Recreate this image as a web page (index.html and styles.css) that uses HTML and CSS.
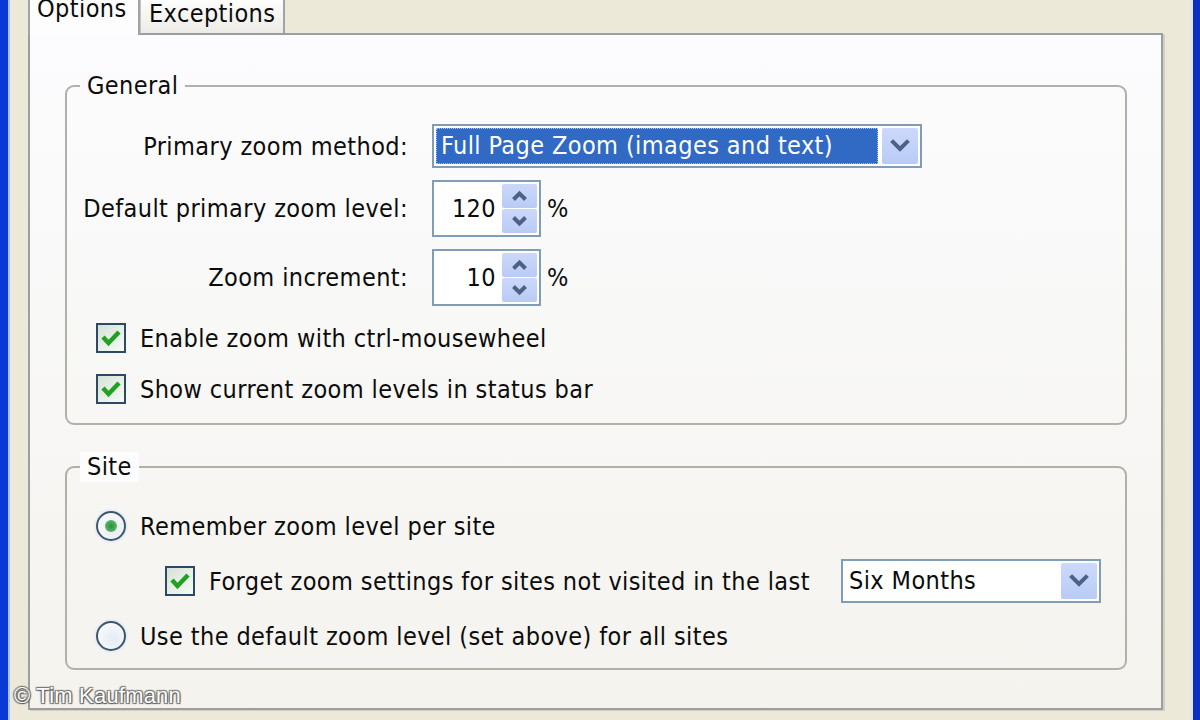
FILE: index.html
```html
<!DOCTYPE html>
<html>
<head>
<meta charset="utf-8">
<link rel="stylesheet" href="styles.css">
</head>
<body>
<div class="frame-l"></div>
<div class="main">
  <div class="tabs">
    <div class="tab tab-opt">Options</div>
    <div class="tab tab-exc">Exceptions</div>
  </div>
  <div class="panel">
    <fieldset class="grp grp-general">
      <legend class="lgd">General</legend>
      <div class="form-grid">
        <div class="lbl">Primary zoom method:</div>
        <div class="combo combo-method">
          <div class="combo-sel">Full Page Zoom (images and text)</div>
          <div class="combo-btn">
            <svg width="36" height="36" viewBox="0 0 36 36"><polyline points="11,14 18,21 25,14" fill="none" stroke="#4d6185" stroke-width="4" stroke-linecap="square"/></svg>
          </div>
        </div>
        <div class="lbl">Default primary zoom level:</div>
        <div class="spin-wrap">
          <div class="spin">
            <div class="spin-val">120</div>
            <div class="spin-btns">
              <div class="spin-b"><svg width="31" height="24" viewBox="0 0 31 24"><polyline points="9.5,15.5 15.5,9.5 21.5,15.5" fill="none" stroke="#4d6185" stroke-width="4"/></svg></div>
              <div class="spin-b"><svg width="31" height="24" viewBox="0 0 31 24"><polyline points="9.5,8.5 15.5,14.5 21.5,8.5" fill="none" stroke="#4d6185" stroke-width="4"/></svg></div>
            </div>
          </div>
          <span class="pct">%</span>
        </div>
        <div class="lbl">Zoom increment:</div>
        <div class="spin-wrap">
          <div class="spin">
            <div class="spin-val">10</div>
            <div class="spin-btns">
              <div class="spin-b"><svg width="31" height="24" viewBox="0 0 31 24"><polyline points="9.5,15.5 15.5,9.5 21.5,15.5" fill="none" stroke="#4d6185" stroke-width="4"/></svg></div>
              <div class="spin-b"><svg width="31" height="24" viewBox="0 0 31 24"><polyline points="9.5,8.5 15.5,14.5 21.5,8.5" fill="none" stroke="#4d6185" stroke-width="4"/></svg></div>
            </div>
          </div>
          <span class="pct">%</span>
        </div>
      </div>
      <div class="checks">
        <div class="row">
          <span class="cb"><svg width="26" height="26" viewBox="0 0 26 26"><polyline points="5,12 10.5,18 21,7" fill="none" stroke="#21a121" stroke-width="4.5"/></svg></span>
          <span>Enable zoom with ctrl-mousewheel</span>
        </div>
        <div class="row">
          <span class="cb"><svg width="26" height="26" viewBox="0 0 26 26"><polyline points="5,12 10.5,18 21,7" fill="none" stroke="#21a121" stroke-width="4.5"/></svg></span>
          <span>Show current zoom levels in status bar</span>
        </div>
      </div>
    </fieldset>

    <fieldset class="grp grp-site">
      <legend class="lgd lgd-site">Site</legend>
      <div class="site-body">
        <div class="row">
          <span class="rb rb-on"><span class="dot"></span></span>
          <span>Remember zoom level per site</span>
        </div>
        <div class="row row-sub">
          <span class="cb"><svg width="26" height="26" viewBox="0 0 26 26"><polyline points="5,12 10.5,18 21,7" fill="none" stroke="#21a121" stroke-width="4.5"/></svg></span>
          <span class="nowrap">Forget zoom settings for sites not visited in the last</span>
          <div class="combo combo-months">
            <div class="combo-txt">Six Months</div>
            <div class="combo-btn">
              <svg width="36" height="36" viewBox="0 0 36 36"><polyline points="11,14 18,21 25,14" fill="none" stroke="#4d6185" stroke-width="4" stroke-linecap="square"/></svg>
            </div>
          </div>
        </div>
        <div class="row">
          <span class="rb"></span>
          <span>Use the default zoom level (set above) for all sites</span>
        </div>
      </div>
    </fieldset>
  </div>
</div>
<div class="frame-r"></div>
<div class="credit">© Tim Kaufmann</div>
</body>
</html>
```

FILE: styles.css
```css
html, body {
  margin: 0;
  padding: 0;
}
body {
  width: 1200px;
  height: 720px;
  overflow: hidden;
  background: #ece9d8;
  font-family: "DejaVu Sans Condensed", "DejaVu Sans", sans-serif;
  font-size: 25px;
  letter-spacing: 0.4px;
  color: #0c0c0c;
  display: flex;
  position: relative;
}
.frame-l {
  width: 8px;
  background: #0a3ad6;
  border-right: 2px solid #a9bdf0;
}
.frame-r {
  width: 7px;
  background: #0b2fc4;
  border-left: 3px solid #dfe3ee;
}
.main {
  flex: 1;
  padding-left: 18px;
  padding-right: 27px;
  display: flex;
  flex-direction: column;
}
.tabs {
  display: flex;
  height: 33px;
  align-items: flex-end;
  flex: none;
}
.tab {
  box-sizing: border-box;
  border: 2px solid #a0a4a4;
  border-bottom: 0;
  border-radius: 4px 4px 0 0;
  line-height: 30px;
  white-space: nowrap;
}
.tab-opt {
  width: 112px;
  height: 43px;
  padding-left: 7px;
  background: #fdfdfd;
  margin-bottom: -2px;
  position: relative;
  z-index: 1;
}
.tab-exc {
  width: 145px;
  height: 36px;
  padding-left: 8px;
  border-left: 1px solid #c4c6c4;
  background: linear-gradient(#fefefe, #ecebe6);
}
.panel {
  box-sizing: border-box;
  height: 677px;
  border: 2px solid #9a9f9f;
  background: linear-gradient(#fcfcfe, #f4f3ee);
  box-shadow: 2px 1px 0 #d2d0c4;
  padding: 0 34px 0 35px;
  display: flex;
  flex-direction: column;
}
.grp {
  margin: 36px 0 0;
  padding: 0 0 14px;
  border: 2px solid #b1b1aa;
  border-radius: 9px;
  min-width: 0;
}
.grp-site {
  margin-top: 27px;
  padding-bottom: 12px;
}
.lgd {
  margin-left: 13px;
  padding: 0 7px;
  line-height: 30px;
}
.lgd-site {
  background: #fdfdfd;
}
.form-grid {
  display: grid;
  grid-template-columns: 341px auto;
  column-gap: 24px;
  row-gap: 12px;
  margin-top: 23px;
  align-items: center;
  justify-items: start;
}
.lbl {
  justify-self: end;
  white-space: nowrap;
}
.combo {
  box-sizing: border-box;
  height: 44px;
  border: 2px solid #7f9db9;
  background: #fff;
  padding: 2px;
  display: flex;
  align-items: stretch;
}
.combo-method {
  width: 490px;
}
.combo-sel {
  flex: 1;
  background: #316ac5;
  color: #fff;
  border: 1px dotted #a9c0ee;
  margin-right: 4px;
  padding-left: 4px;
  line-height: 34px;
  white-space: nowrap;
}
.combo-txt {
  flex: 1;
  padding-left: 4px;
  line-height: 36px;
  white-space: nowrap;
}
.combo-btn {
  width: 36px;
  background: linear-gradient(#cdd9fb, #b8cbf6);
  border-radius: 2px;
  display: flex;
  align-items: center;
  justify-content: center;
}
.spin-wrap {
  display: flex;
  align-items: center;
  gap: 6px;
}
.spin {
  box-sizing: border-box;
  width: 109px;
  height: 57px;
  border: 2px solid #7f9db9;
  background: #fff;
  padding: 2px;
  display: flex;
}
.spin-val {
  flex: 1;
  text-align: right;
  padding-right: 6px;
  align-self: center;
}
.spin-btns {
  width: 35px;
  display: flex;
  flex-direction: column;
  gap: 1px;
}
.spin-b {
  flex: 1;
  background: linear-gradient(#ccd8fa, #b9cbf5);
  border-radius: 2px;
  display: flex;
  align-items: center;
  justify-content: center;
}
.checks {
  padding-left: 29px;
  margin-top: 12px;
  display: flex;
  flex-direction: column;
  gap: 11px;
}
.row {
  height: 40px;
  display: flex;
  align-items: center;
  gap: 14px;
  white-space: nowrap;
}
.cb {
  box-sizing: border-box;
  width: 30px;
  height: 30px;
  border: 2px solid #2c4a64;
  background: linear-gradient(135deg, #d6e2d6, #f6faf6);
  display: flex;
  align-items: center;
  justify-content: center;
  flex: none;
}
.site-body {
  margin-top: 24px;
  padding-left: 29px;
  display: flex;
  flex-direction: column;
  gap: 13px;
}
.row-sub {
  height: 44px;
  padding-left: 69px;
  padding-right: 24px;
}
.combo-months {
  width: 260px;
  margin-left: auto;
}
.rb {
  box-sizing: border-box;
  width: 30px;
  height: 30px;
  border: 2px solid #3f5568;
  border-radius: 50%;
  background: radial-gradient(circle at 60% 60%, #e4ebf4, #ffffff);
  box-shadow: 0 0 0 2px #e8eef8;
  display: flex;
  align-items: center;
  justify-content: center;
  flex: none;
}
.dot {
  width: 12px;
  height: 12px;
  border-radius: 50%;
  background: radial-gradient(circle, #2d8c3c, #6cc878);
}
.nowrap {
  white-space: nowrap;
}
.credit {
  position: absolute;
  left: 14px;
  top: 683px;
  font-family: "Liberation Sans", Arial, sans-serif;
  font-size: 22px;
  letter-spacing: 0.2px;
  color: #ffffff;
  text-shadow: 1px 1px 1px #555, -1px -1px 1px #777, 1px -1px 1px #777, -1px 1px 1px #777;
}
```
